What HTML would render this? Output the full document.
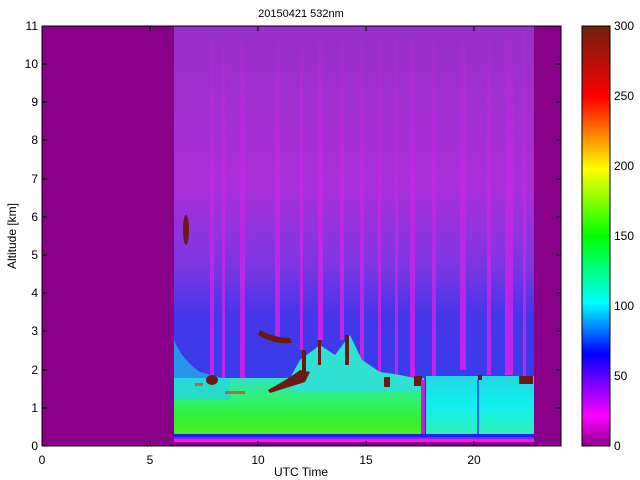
<!DOCTYPE html>
<html><head><meta charset="utf-8"><style>
html,body{margin:0;padding:0;background:#fff;}
svg{display:block;}
text{font-family:"Liberation Sans",sans-serif;font-size:12px;fill:#000;}
</style></head><body>
<svg width="640" height="480" viewBox="0 0 640 480">
<defs>
<linearGradient id="cb" x1="0" y1="1" x2="0" y2="0">
<stop offset="0" stop-color="#880088"/>
<stop offset="0.07" stop-color="#ff00ff"/>
<stop offset="0.22" stop-color="#0000ff"/>
<stop offset="0.34" stop-color="#00ffff"/>
<stop offset="0.5" stop-color="#00ff00"/>
<stop offset="0.66" stop-color="#ffff00"/>
<stop offset="0.83" stop-color="#ff0000"/>
<stop offset="1" stop-color="#702010"/>
</linearGradient>
<linearGradient id="sky" x1="0" y1="0" x2="0" y2="1">
<stop offset="0" stop-color="#9a30c8"/>
<stop offset="0.45" stop-color="#b030dc"/>
<stop offset="0.68" stop-color="#7838e8"/>
<stop offset="0.82" stop-color="#3838f0"/>
<stop offset="1" stop-color="#2a40f0"/>
</linearGradient>
<linearGradient id="st" x1="0" y1="0" x2="0" y2="1">
<stop offset="0" stop-color="#e020f0" stop-opacity="0.1"/>
<stop offset="0.5" stop-color="#e020f0" stop-opacity="0.6"/>
<stop offset="1" stop-color="#e020f0" stop-opacity="0.9"/>
</linearGradient>
<linearGradient id="bl" x1="0" y1="0" x2="0" y2="1">
<stop offset="0" stop-color="#30e0c0"/>
<stop offset="0.3" stop-color="#30f080"/>
<stop offset="0.7" stop-color="#30f030"/>
<stop offset="1" stop-color="#50f020"/>
</linearGradient>
<linearGradient id="bl2" x1="0" y1="0" x2="0" y2="1">
<stop offset="0" stop-color="#20d8e0"/>
<stop offset="0.5" stop-color="#10f0f0"/>
<stop offset="1" stop-color="#30f0b0"/>
</linearGradient>
</defs>
<rect x="42" y="26" width="519" height="420" fill="#880088"/>
<rect x="174" y="26" width="360" height="354" fill="url(#sky)"/>
<g fill="url(#st)">
<rect x="210" y="40" width="4" height="340"/>
<rect x="222" y="40" width="3" height="340"/>
<rect x="240" y="40" width="5" height="340"/>
<rect x="275" y="40" width="5" height="300"/>
<rect x="300" y="40" width="3" height="310"/>
<rect x="318" y="40" width="5" height="300"/>
<rect x="340" y="40" width="4" height="300"/>
<rect x="360" y="40" width="4" height="330"/>
<rect x="378" y="40" width="3" height="340"/>
<rect x="395" y="40" width="3" height="340"/>
<rect x="410" y="40" width="5" height="340"/>
<rect x="432" y="40" width="4" height="340"/>
<rect x="460" y="40" width="6" height="330"/>
<rect x="487" y="40" width="4" height="335"/>
<rect x="505" y="30" width="8" height="345"/>
<rect x="523" y="30" width="3" height="350"/>
</g>
<rect x="174" y="26" width="360" height="354" fill="#9030c0" opacity="0.15"/>
<rect x="174" y="378" width="250" height="58" fill="url(#bl)"/>
<rect x="426" y="376" width="108" height="60" fill="url(#bl2)"/>
<path d="M174 400 L174 340 Q182 360 200 372 L230 380 L230 400 Z" fill="#20d0f0" opacity="0.6"/>
<path d="M290 378 L300 360 L320 345 L335 355 L350 335 L362 360 L380 372 L400 375 L424 380 L424 392 L290 392 Z" fill="#30e0d0"/>
<g fill="#6a1a10">
<ellipse cx="186" cy="230" rx="3" ry="15"/>
<ellipse cx="212" cy="380" rx="6" ry="5"/>
<path d="M260 330 Q275 338 290 338 L292 343 Q275 345 258 335 Z"/>
<path d="M268 390 Q290 378 300 370 L310 372 L305 382 L270 393 Z"/>
<rect x="302" y="350" width="4" height="22"/>
<rect x="318" y="340" width="3" height="25"/>
<rect x="345" y="335" width="4" height="30"/>
<rect x="384" y="377" width="6" height="10"/>
<rect x="414" y="376" width="8" height="10"/>
<rect x="519" y="376" width="14" height="8"/>
<rect x="478" y="375" width="4" height="5"/>
</g>
<g fill="#ff3010" opacity="0.7">
<rect x="225" y="391" width="20" height="3"/><rect x="195" y="383" width="8" height="3"/>
</g>
<rect x="421" y="380" width="4" height="58" fill="#c020e0"/>
<rect x="477" y="380" width="2" height="56" fill="#2060f0"/>
<rect x="174" y="434" width="360" height="3" fill="#2020f0"/>
<rect x="174" y="437" width="360" height="2" fill="#9020f0"/>
<rect x="174" y="439" width="360" height="3" fill="#ff10ff"/>
<rect x="42" y="26" width="519" height="420" fill="none" stroke="#000" stroke-width="1"/>
<g stroke="#000" stroke-width="1">
<path d="M42 446v-5M150 446v-5M258 446v-5M366 446v-5M474 446v-5M42 26v5M150 26v5M258 26v5M366 26v5M474 26v5"/>
<path d="M42 446h5M42 408h5M42 370h5M42 331h5M42 293h5M42 255h5M42 217h5M42 179h5M42 140h5M42 102h5M42 64h5M42 26h5"/>
<path d="M561 408h-5M561 370h-5M561 331h-5M561 293h-5M561 255h-5M561 217h-5M561 179h-5M561 140h-5M561 102h-5M561 64h-5"/>
</g>
<rect x="582" y="26" width="28" height="420" fill="url(#cb)" stroke="#000"/>
<g text-anchor="end">
<text x="38" y="450">0</text><text x="38" y="412">1</text><text x="38" y="374">2</text><text x="38" y="335">3</text><text x="38" y="297">4</text><text x="38" y="259">5</text><text x="38" y="221">6</text><text x="38" y="183">7</text><text x="38" y="144">8</text><text x="38" y="106">9</text><text x="38" y="68">10</text><text x="38" y="30">11</text>
</g>
<g text-anchor="middle">
<text x="42" y="464">0</text><text x="150" y="464">5</text><text x="258" y="464">10</text><text x="366" y="464">15</text><text x="474" y="464">20</text>
<text x="301" y="476">UTC Time</text>
<text x="301" y="17" style="font-size:11px">20150421 532nm</text>
</g>
<g>
<text x="614" y="450">0</text><text x="614" y="380">50</text><text x="614" y="310">100</text><text x="614" y="240">150</text><text x="614" y="170">200</text><text x="614" y="100">250</text><text x="614" y="30">300</text>
</g>
<text x="16" y="236" text-anchor="middle" transform="rotate(-90 16 236)">Altitude [km]</text>
</svg>
</body></html>
